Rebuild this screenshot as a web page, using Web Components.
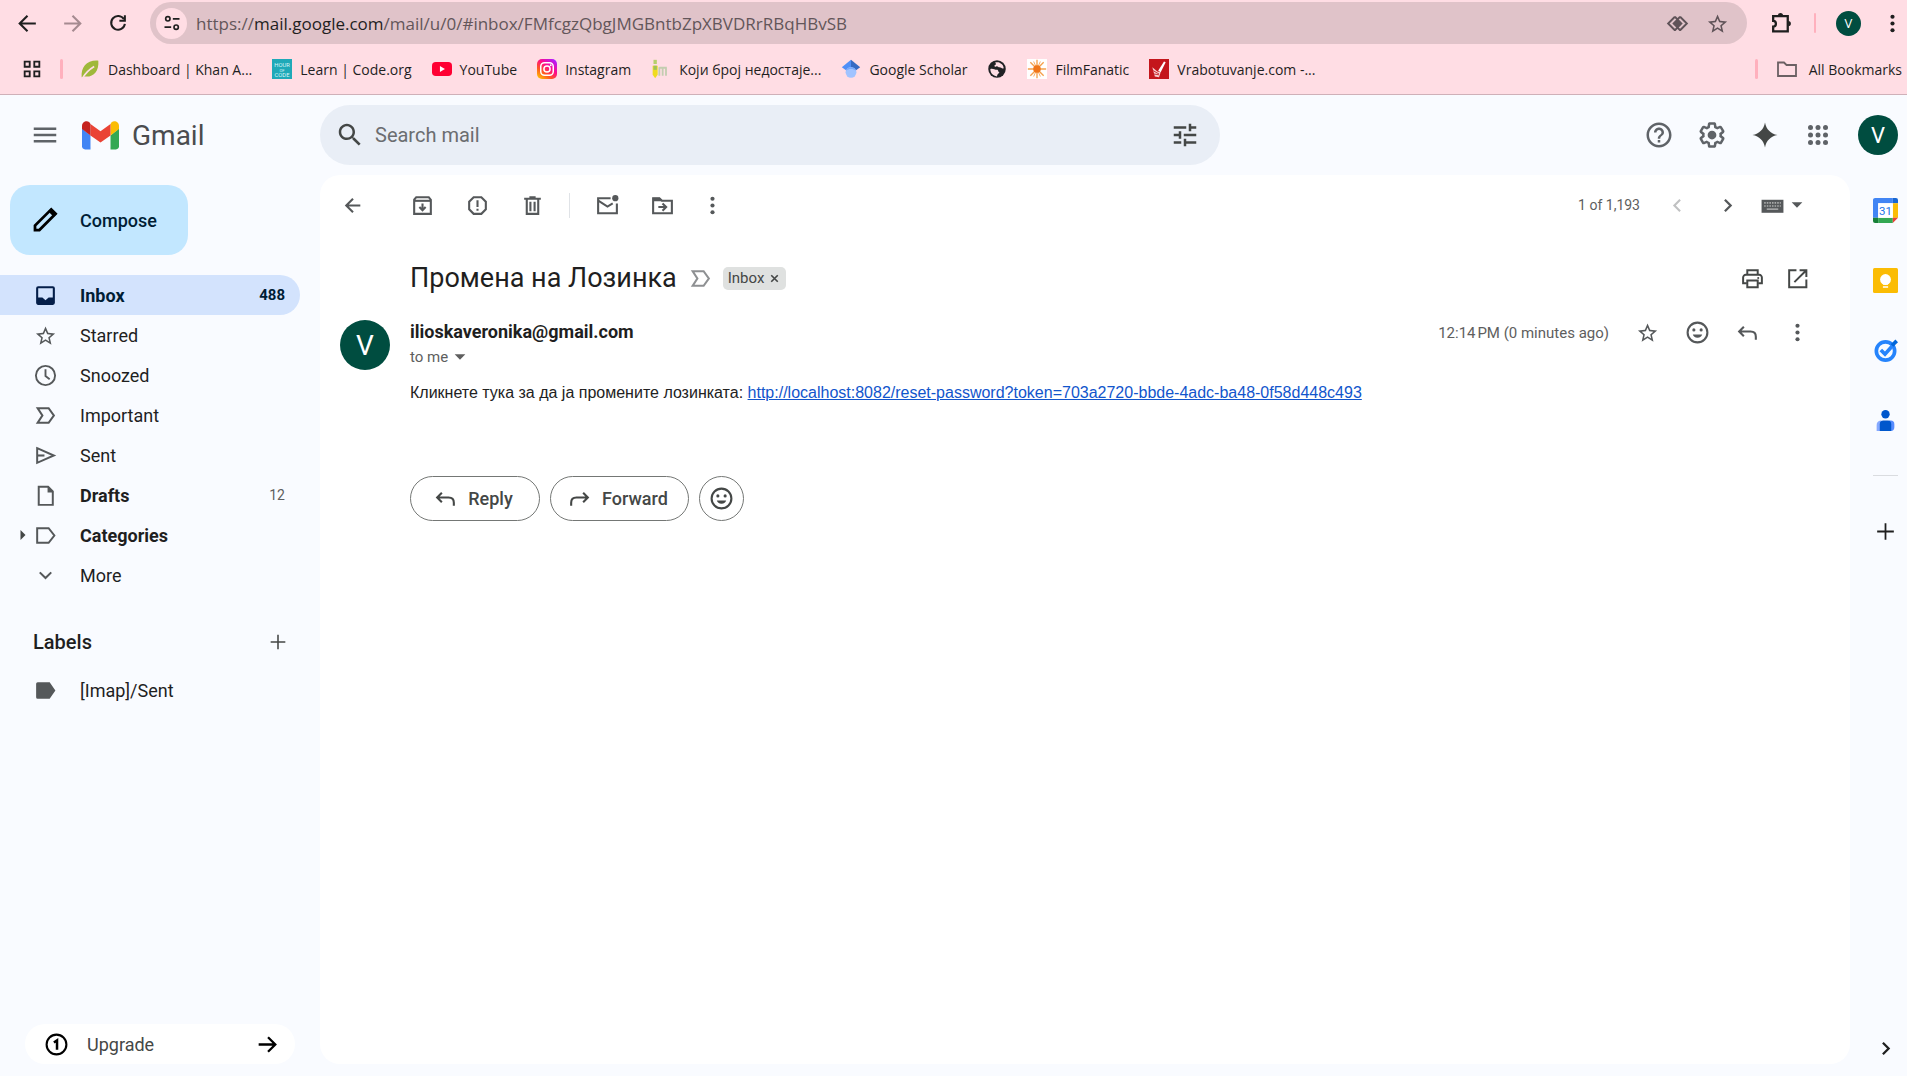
<!DOCTYPE html>
<html lang="en">
<head>
<meta charset="utf-8">
<meta name="viewport" content="width=device-width, initial-scale=1">
<title>Промена на Лозинка - Gmail</title>
<style>
    html, body {
        margin: 0;
        height: 100%;
    }
    body {
        display: flex;
        flex-direction: column;
        min-height: 100vh;
        background: #f9fbff;
        color: #1f1f1f;
        font-family: Roboto, "Liberation Sans", sans-serif;
        --icon: #444746;
        --muted: #5e5e5e;
    }
    gmail-app {
        flex: 1;
    }
</style>
</head>
<body>
<browser-chrome url-scheme="https://" url-host="mail.google.com" url-path="/mail/u/0/#inbox/FMfcgzQbgJMGBntbZpXBVDRrRBqHBvSB">
    <bookmark-link icon="khan">Dashboard | Khan A...</bookmark-link>
    <bookmark-link icon="code">Learn | Code.org</bookmark-link>
    <bookmark-link icon="youtube">YouTube</bookmark-link>
    <bookmark-link icon="instagram">Instagram</bookmark-link>
    <bookmark-link icon="quiz">Који број недостаје...</bookmark-link>
    <bookmark-link icon="scholar">Google Scholar</bookmark-link>
    <bookmark-link icon="globe"></bookmark-link>
    <bookmark-link icon="film">FilmFanatic</bookmark-link>
    <bookmark-link icon="vrab">Vrabotuvanje.com -...</bookmark-link>
</browser-chrome>

<gmail-app>
    <gmail-header slot="header"></gmail-header>
    <mail-sidebar slot="sidebar">
        <nav-item icon="inbox" count="488" active>Inbox</nav-item>
        <nav-item icon="star">Starred</nav-item>
        <nav-item icon="clock">Snoozed</nav-item>
        <nav-item icon="important">Important</nav-item>
        <nav-item icon="send">Sent</nav-item>
        <nav-item icon="draft" count="12" strong>Drafts</nav-item>
        <nav-item icon="label" strong expandable>Categories</nav-item>
        <nav-item icon="expand">More</nav-item>
        <nav-item icon="labelFilled" slot="labels">[Imap]/Sent</nav-item>
    </mail-sidebar>
    <mail-view slot="main">
        <mail-toolbar slot="toolbar"></mail-toolbar>
        <mail-message sender="ilioskaveronika@gmail.com" initial="V" time="12:14&#8239;PM (0 minutes ago)">
            <span slot="subject">Промена на Лозинка</span>
            Кликнете тука за да ја промените лозинката:
            <a href="http://localhost:8082/reset-password?token=703a2720-bbde-4adc-ba48-0f58d448c493">http://localhost:8082/reset-password?token=703a2720-bbde-4adc-ba48-0f58d448c493</a>
        </mail-message>
    </mail-view>
    <side-rail slot="rail"></side-rail>
</gmail-app>

<script>
const line = (d, w = 2) => `<path d="${d}" fill="none" stroke="currentColor" stroke-width="${w}"/>`;
const fill = d => `<path d="${d}" fill="currentColor"/>`;
const dots = pts => pts.map(([x, y, r]) => `<circle cx="${x}" cy="${y}" r="${r}" fill="currentColor"/>`).join('');
const ring = (x, y, r, w = 2) => `<circle cx="${x}" cy="${y}" r="${r}" fill="none" stroke="currentColor" stroke-width="${w}"/>`;

const ICONS = {
    // browser
    navBack: line('M20 12H5M12 4.5L4.5 12l7.5 7.5'),
    navForward: line('M4 12h15M12 4.5l7.5 7.5-7.5 7.5'),
    reload: line('M18.5 8A7.5 7.5 0 1 0 19.5 13', 2.2) + line('M19.5 3.5v6h-6', 2.2),
    siteInfo: line('M13 7h8M3 17h8') + ring(7, 7, 2.6) + ring(17, 17, 2.6),
    lens: line('M9.5 5.5L3 12l6.5 6.5M14.5 5.5L21 12l-6.5 6.5M9.5 5.5L12 8l2.5-2.5M9.5 18.5L12 16l2.5 2.5', 1.8) + fill('M12 7l5 5-5 5-5-5z'),
    puzzle: line('M4 5h14v14.5H4V15c3.5 0 3.5-5.5 0-5.5z', 2.2) + fill('M8.5 4.5a2.5 2.5 0 0 1 5 0zM18.5 9.5a2.5 2.5 0 0 1 0 5z'),
    grid: line('M4 4h5.5v5.5H4zM14.5 4H20v5.5h-5.5zM4 14.5h5.5V20H4zM14.5 14.5H20V20h-5.5z'),
    folder: line('M3 5.5h6L11.5 8H21v11H3z', 1.8),
    khan: '<path d="M2 22C1 10 8 1 22 2c1 13-6 20-16 19z" fill="#9fb83a"/><path d="M3 23C7 16 12 12 17 9" fill="none" stroke="#ffdde4" stroke-width="2"/>',
    code: '<rect width="24" height="24" fill="#1fa9b8"/><g fill="#d6f3f5" font-family="Roboto, sans-serif" font-size="7" text-anchor="middle"><text x="12" y="9">HOUR</text><text x="12" y="15" font-size="5">OF</text><text x="12" y="21">CODE</text></g>',
    youtube: '<rect y="3.5" width="24" height="17" rx="4.5" fill="#ff0033"/><path d="M9.5 8.5v7l6-3.5z" fill="#fff"/>',
    instagram: '<defs><linearGradient id="ig" x1="0" y1="1" x2=".8" y2="0"><stop offset="0" stop-color="#ffd400"/><stop offset=".35" stop-color="#ff5a1f"/><stop offset=".65" stop-color="#ff0a8a"/><stop offset="1" stop-color="#b01cff"/></linearGradient></defs><rect width="24" height="24" rx="6" fill="url(#ig)"/><rect x="4.5" y="4.5" width="15" height="15" rx="4.5" fill="none" stroke="#fff" stroke-width="1.8"/><circle cx="12" cy="12" r="3.7" fill="none" stroke="#fff" stroke-width="1.8"/><circle cx="16.5" cy="7.5" r="1.1" fill="#fff"/>',
    quiz: '<rect x="3" y="1" width="4" height="5" fill="#b5cf6b"/><path d="M2 8h6v11l-3 4-3-4z" fill="#f0dc1e"/><path d="M3 8h4v5H3z" fill="#9fc25a"/><path d="M10 20V10M14 20V11M18 20V11M10 10.5h9" stroke="#c3cdb0" stroke-width="2.2"/>',
    scholar: '<path d="M12 1l11 9-7 5-4-5z" fill="#356ac3"/><path d="M12 1L1 10l7 5 4-5z" fill="#4f8ff7"/><circle cx="12" cy="16" r="6.5" fill="#a0c3ff"/><path d="M6 14a6.5 6.5 0 0 1 12 0c-3-2.5-9-2.5-12 0z" fill="#76a7fa"/>',
    globe: '<circle cx="12" cy="12" r="10.5" fill="#202124"/><path d="M4 12c3-1 5 1 8 1 2 0 1 3 3 3-1 2-3 2-3 5-5-1-8-4-8-9zM10 4c2 0 4-1 6 1 3 1 4 4 4 6-2 1-3-1-5-1s-2-2-4-1-3-1-1-2 0-1 0-3z" fill="#ffdde4"/>',
    film: '<rect width="24" height="24" fill="#fff"/><path d="M12 1v22M1 12h22M4 4l16 16M20 4L4 20" stroke="#f5a04b" stroke-width="1.6"/><path d="M8 3l8 18M16 3L8 21" stroke="#f5a04b"/><circle cx="12" cy="12" r="4.5" fill="#f0761a"/>',
    vrab: '<rect width="24" height="24" fill="#c4161c"/><path d="M11 14L18 3l2 1-6 12z" fill="#fff"/><path d="M4 10l6 5 4 1-2 6-5-1z" fill="#f6cfd0"/><path d="M5 14l7 4M6 18l6 1" stroke="#c4161c"/>',
    // mail header
    menu: fill('M3 18h18v-2H3v2zm0-5h18v-2H3v2zm0-7v2h18V6H3z'),
    search: fill('M15.5 14h-.79l-.28-.27C15.41 12.59 16 11.11 16 9.5 16 5.91 13.09 3 9.5 3S3 5.91 3 9.5 5.91 16 9.5 16c1.61 0 3.09-.59 4.23-1.57l.27.28v.79l5 4.99L20.49 19l-4.99-5zm-6 0C7.01 14 5 11.99 5 9.5S7.01 5 9.5 5 14 7.01 14 9.5 11.99 14 9.5 14z'),
    tune: fill('M3 17v2h6v-2H3zM3 5v2h10V5H3zm10 16v-2h8v-2h-8v-2h-2v6h2zM7 9v2H3v2h4v2h2V9H7zm14 4v-2H11v2h10zm-6-4h2V7h4V5h-4V3h-2v6z'),
    help: fill('M11 18h2v-2h-2v2zm1-16C6.48 2 2 6.48 2 12s4.48 10 10 10 10-4.48 10-10S17.52 2 12 2zm0 18c-4.41 0-8-3.59-8-8s3.59-8 8-8 8 3.59 8 8-3.59 8-8 8zm0-14c-2.21 0-4 1.79-4 4h2c0-1.1.9-2 2-2s2 .9 2 2c0 2-3 1.75-3 5h2c0-2.25 3-2.5 3-5 0-2.21-1.79-4-4-4z'),
    settings: fill('M13.85 22.25h-3.7c-.74 0-1.36-.54-1.45-1.27l-.27-1.89c-.27-.14-.53-.29-.79-.46l-1.8.72c-.7.26-1.47-.03-1.81-.65L2.2 15.53c-.35-.66-.2-1.44.36-1.88l1.53-1.19c-.01-.15-.02-.3-.02-.46 0-.15.01-.31.02-.46l-1.52-1.19c-.59-.45-.74-1.26-.37-1.88l1.85-3.19c.34-.62 1.11-.9 1.79-.63l1.81.73c.26-.17.52-.32.78-.46l.27-1.91c.09-.7.71-1.25 1.44-1.25h3.7c.74 0 1.36.54 1.45 1.27l.27 1.89c.27.14.53.29.79.46l1.8-.72c.71-.26 1.48.03 1.82.65l1.84 3.18c.36.66.2 1.44-.36 1.88l-1.52 1.19c.01.15.02.3.02.46s-.01.31-.02.46l1.52 1.19c.56.45.72 1.23.37 1.86l-1.86 3.22c-.34.62-1.11.9-1.8.63l-1.8-.72c-.26.17-.52.32-.78.46l-.27 1.91c-.1.68-.72 1.22-1.46 1.22zm-3.23-2h2.76l.37-2.55.53-.22c.44-.18.88-.44 1.34-.78l.45-.34 2.38.96 1.38-2.4-2.03-1.58.07-.56c.03-.26.06-.51.06-.78s-.03-.53-.06-.78l-.07-.56 2.03-1.58-1.39-2.4-2.39.96-.45-.35c-.42-.32-.87-.58-1.33-.77l-.52-.22-.37-2.55h-2.76l-.37 2.55-.53.21c-.44.19-.88.44-1.34.79l-.45.33-2.38-.95-1.39 2.39 2.03 1.58-.07.56a7 7 0 0 0-.06.79c0 .26.02.53.06.78l.07.56-2.03 1.58 1.38 2.4 2.39-.96.45.35c.43.33.86.58 1.33.77l.53.22.38 2.55z') + dots([[12, 12, 3.5]]),
    sparkle: fill('M12 2c1 5.5 4.5 9 10 10-5.5 1-9 4.5-10 10-1-5.5-4.5-9-10-10 5.5-1 9-4.5 10-10z'),
    apps: dots([[6, 6, 2], [12, 6, 2], [18, 6, 2], [6, 12, 2], [12, 12, 2], [18, 12, 2], [6, 18, 2], [12, 18, 2], [18, 18, 2]]),
    gmail: '<path d="M2 21h3.5v-9L0 7.5V19c0 1.1.9 2 2 2z" fill="#4285f4"/><path d="M18.5 21H22c1.1 0 2-.9 2-2V7.5L18.5 12z" fill="#34a853"/><path d="M18.5 4.5V12L24 7.8v-2c0-2.5-2.8-3.9-4.8-2.4z" fill="#fbbc04"/><path d="M5.5 12V4.5L12 9.3l6.5-4.8V12L12 16.5z" fill="#ea4335"/><path d="M0 5.8v2L5.5 12V4.5l-.7-1.1C2.800 1.9 0 3.300 0 5.8z" fill="#c5221f"/>',
    // sidebar
    pencil: line('M4 20v-3.5L17 3.5 20.5 7 7.5 20z', 2.2) + fill('M14.5 5L17 2.5 21.5 7 19 9.5z'),
    inbox: fill('M19 3H5a2 2 0 0 0-2 2v14c0 1.1.9 2 2 2h14a2 2 0 0 0 2-2V5a2 2 0 0 0-2-2zm0 11h-4l-3 2.5L9 14H5V5h14z'),
    star: `<g transform="translate(1 1.5) scale(.92)">${fill('M22 9.24l-7.19-.62L12 2 9.19 8.63 2 9.24l5.46 4.73L5.82 21 12 17.27 18.18 21l-1.63-7.03L22 9.24zM12 15.4l-3.76 2.27 1-4.28-3.32-2.88 4.38-.38L12 6.1l1.71 4.04 4.38.38-3.32 2.88 1 4.28L12 15.4z')}</g>`,
    clock: ring(12, 12, 9.2, 1.8) + line('M12 6v6.5l4 3', 1.8),
    important: line('M4.5 5H15l5 7-5 7H4.5L9 12z'),
    send: line('M4 5l16 7-16 7z', 1.9) + line('M4 12h7'),
    draft: line('M5.5 3.5h9L19 8v13H5.5z', 1.9) + fill('M14 3v6h5.5z'),
    label: line('M4 5h11l5.5 7-5.5 7H4z', 1.9),
    labelFilled: fill('M3 5.5A1.5 1.5 0 0 1 4.5 4H16l5.5 8-5.500 8H4.500A1.500 1.500 0 0 1 3 18.500z'),
    expand: line('M6.5 9l5.5 5.5L17.5 9'),
    add: line('M12 4v16M4 12h16', 1.7),
    caretRight: fill('M9 6l6 6-6 6z'),
    caretDown: fill('M4 8h16l-8 8z'),
    one: ring(12, 12, 9.5) + line('M9.5 10l3-2v9', 2.4),
    arrowRight: line('M3.5 12h16M12.5 5l7 7-7 7', 2.2),
    // message
    back: line('M19.5 12h-13M12.5 5.5L6 12l6.5 6.5'),
    archive: line('M4 6.5L6 4h12l2 2.5V20H4z') + line('M4 7.5h16') + line('M12 10v6M9 13.5l3 3 3-3'),
    report: line('M8.3 4h7.4L20 8.3v7.4L15.7 20H8.3L4 15.7V8.3z') + line('M12 7v6.5M12 15v2'),
    trash: line('M6.5 6v14h11V6M4 5.5h16M9 4h6') + line('M10 8.5v9M14 8.5v9'),
    unread: line('M15 5H3v14.5h18V10') + line('M3.5 7.5L12 13l5-3') + dots([[19.5, 5, 3]]),
    move: line('M3 5h6l2.5 2.5H21v12H3z') + fill('M3 4.5h6.5L12 8H3z') + line('M8 13.5h7M12 10l3.5 3.5L12 17'),
    more: dots([[12, 5.5, 2], [12, 12, 2], [12, 18.5, 2]]),
    prev: line('M14.5 6.5L9 12l5.5 5.5'),
    next: line('M9.5 6.5L15 12l-5.500 5.500', 2.2),
    keyboard: fill('M1.500 6.500h21V19h-21z') + '<path d="M4 9.500h16M4 12.500h16" stroke="#a9aaaa" stroke-width="1.5" stroke-dasharray="1.5 1"/><path d="M6.500 15.500h11" stroke="#a9aaaa" stroke-width="1.5"/>',
    print: line('M7 8V4h10v4M6 16.5H3V11a2.5 2.5 0 0 1 2.5-2.5h13A2.5 2.5 0 0 1 21 11v5.5h-3M7 14h10v6.5H7z', 1.9) + dots([[17.5, 11.5, 1]]),
    popout: line('M11 4H4v16.5h16.5V13M14 4h6.5v6.5M20 4.5L9 15.5', 1.9),
    emoji: ring(12, 12, 9.5) + dots([[8.5, 9.5, 1.5], [15.5, 9.5, 1.5]]) + fill('M7.5 14h9a4.6 3.8 0 0 1-9 0z'),
    reply: line('M8.5 6.5L4 11l4.5 4.5M4.5 11H15q5 0 5 5v3'),
    forward: line('M15.5 6.5L20 11l-4.5 4.5M19.5 11H9q-5 0-5 5v3'),
    close: line('M6 6l12 12M18 6L6 18', 3),
    // rail
    calendar: '<path d="M2 0h17v5H5v14H0V2C0 .9.9 0 2 0z" fill="#4285f4"/><path d="M19 0h3a2 2 0 0 1 2 2v3h-5z" fill="#1967d2"/><path d="M19 5h5v14h-5z" fill="#fbbc04"/><path d="M5 19h14v5H5z" fill="#34a853"/><path d="M0 19h5v5H2a2 2 0 0 1-2-2z" fill="#188038"/><path d="M19 19h5l-5 5z" fill="#ea4335"/><path d="M5 5h14v14H5z" fill="#fff"/><text x="12" y="16" font-family="Roboto, sans-serif" font-size="11" text-anchor="middle" fill="#1a73e8">31</text>',
    keep: '<rect width="24" height="24" rx="1.5" fill="#fbbc04"/><circle cx="12" cy="11" r="5.2" fill="#fff"/><path d="M9.5 13h5v3h-5zM9.5 17.5h5V19h-5z" fill="#fff"/>',
    tasks: '<circle cx="12" cy="12.5" r="8.8" fill="none" stroke="#2684fc" stroke-width="3.5"/><path d="M7.5 11.5l4 4L20 6" fill="none" stroke="#2684fc" stroke-width="3.5"/><path d="M17 6l4.5-4.5L24 4l-4.5 4.5z" fill="#0066da"/>',
    contacts: '<circle cx="12" cy="6" r="4" fill="#0057cc"/><path d="M8 12h-.5a4.5 4.5 0 0 0-4 4.5V22H9z" fill="#86a9ff"/><path d="M15 12h2a3.5 3.5 0 0 1 3.5 3.5v3A3.5 3.5 0 0 1 17 22h-2z" fill="#578cff"/><path d="M10 12h4a3.5 3.5 0 0 1 3.5 3.5V22h-11v-6.5A3.5 3.5 0 0 1 10 12z" fill="#0057cc"/>'
};

class AppIcon extends HTMLElement {
    constructor() {
        super();
        this.attachShadow({ mode: 'open' });
    }

    connectedCallback() {
        const size = this.getAttribute('size') || 25;
        this.shadowRoot.innerHTML = `
            <style>
                :host { display: inline-flex; flex: none; }
                svg { display: block; }
            </style>
            <svg width="${size}" height="${size}" viewBox="0 0 24 24" aria-hidden="true">${ICONS[this.getAttribute('name')]}</svg>
        `;
    }
}

class IconButton extends HTMLElement {
    constructor() {
        super();
        this.attachShadow({ mode: 'open' });
    }

    connectedCallback() {
        this.shadowRoot.innerHTML = `
            <style>
                :host { display: block; flex: none; width: 45px; color: var(--icon); }
                button {
                    display: flex;
                    align-items: center;
                    justify-content: center;
                    gap: 4px;
                    width: 100%;
                    height: 40px;
                    padding: 0;
                    border: 0;
                    border-radius: 20px;
                    background: none;
                    color: inherit;
                    cursor: pointer;
                }
            </style>
            <button type="button" aria-label="${this.getAttribute('label')}">
                <app-icon name="${this.getAttribute('icon')}" size="${this.getAttribute('size') || 25}"></app-icon>
                <slot></slot>
            </button>
        `;
    }
}

class UserAvatar extends HTMLElement {
    constructor() {
        super();
        this.attachShadow({ mode: 'open' });
        this.shadowRoot.innerHTML = `
            <style>
                :host {
                    display: flex;
                    flex: none;
                    align-items: center;
                    justify-content: center;
                    width: 40px;
                    height: 40px;
                    border-radius: 50%;
                    background: #004d40;
                    color: #fff;
                    font-size: 22px;
                }
            </style>
            <slot></slot>
        `;
    }
}

class BookmarkLink extends HTMLElement {
    constructor() {
        super();
        this.attachShadow({ mode: 'open' });
    }

    connectedCallback() {
        this.shadowRoot.innerHTML = `
            <style>
                :host { display: block; flex: none; }
                a {
                    display: flex;
                    align-items: center;
                    gap: 8px;
                    color: #1f1f1f;
                    text-decoration: none;
                    white-space: nowrap;
                }
            </style>
            <a href="#"><app-icon name="${this.getAttribute('icon')}" size="20"></app-icon><slot></slot></a>
        `;
    }
}

class BrowserChrome extends HTMLElement {
    constructor() {
        super();
        this.attachShadow({ mode: 'open' });
    }

    connectedCallback() {
        this.shadowRoot.innerHTML = `
            <style>
                :host {
                    display: block;
                    flex: none;
                    background: #ffdde4;
                    border-bottom: 1px solid #cfb0b8;
                    color: #1f1f1f;
                    font-family: "Open Sans", "Noto Sans", sans-serif;
                    font-size: 14px;
                    --icon: #1f1f1f;
                }
                .row { display: flex; align-items: center; }
                .nav { height: 42px; padding: 2px 0 2px 5px; }
                .disabled { --icon: #a58a90; }
                .omnibox {
                    display: flex;
                    flex: 1;
                    align-items: center;
                    min-width: 0;
                    height: 42px;
                    margin-left: 10px;
                    padding: 0 10px 0 6px;
                    border-radius: 21px;
                    background: #e0c3c9;
                    box-sizing: border-box;
                    --icon: #5f5358;
                }
                .site {
                    display: flex;
                    align-items: center;
                    justify-content: center;
                    width: 31px;
                    height: 31px;
                    padding: 0;
                    border: 0;
                    border-radius: 50%;
                    background: #ffdde4;
                    color: #1f1f1f;
                }
                .url {
                    flex: 1;
                    min-width: 0;
                    margin-left: 9px;
                    overflow: hidden;
                    color: #63565a;
                    font-size: 17px;
                    white-space: nowrap;
                }
                .url b { color: #1f1f1f; font-weight: 400; }
                .omnibox icon-button { width: 40px; }
                .extensions { margin-left: 12px; }
                .divider { flex: none; width: 3px; height: 20px; border-radius: 2px; background: #ffb0bd; }
                .nav .divider { width: 2px; margin: 0 20px 0 10px; }
                user-avatar { width: 25px; height: 25px; font-size: 13px; }
                .nav > .last { width: 30px; margin-left: 16px; }
                .marks { height: 48px; padding: 0 5px 2px 21px; box-sizing: border-box; }
                .marks > .divider { margin: 0 17px; }
                .list { display: flex; flex: 1; gap: 20px; min-width: 0; overflow: hidden; }
                .all { display: flex; align-items: center; gap: 10px; color: #1f1f1f; text-decoration: none; white-space: nowrap; }
                .all app-icon { color: #6b6063; }
            </style>
            <div class="row nav">
                <icon-button icon="navBack" label="Back"></icon-button>
                <icon-button class="disabled" icon="navForward" label="Forward"></icon-button>
                <icon-button icon="reload" label="Reload" size="22"></icon-button>
                <div class="omnibox">
                    <button class="site" type="button" aria-label="Site information"><app-icon name="siteInfo" size="20"></app-icon></button>
                    <div class="url">${this.getAttribute('url-scheme')}<b>${this.getAttribute('url-host')}</b>${this.getAttribute('url-path')}</div>
                    <icon-button icon="lens" label="Search with Lens"></icon-button>
                    <icon-button icon="star" label="Bookmark this tab"></icon-button>
                </div>
                <icon-button class="extensions" icon="puzzle" label="Extensions"></icon-button>
                <span class="divider"></span>
                <user-avatar>V</user-avatar>
                <icon-button class="last" icon="more" label="Chrome menu"></icon-button>
            </div>
            <div class="row marks">
                <app-icon name="grid" size="22"></app-icon>
                <span class="divider"></span>
                <div class="list"><slot></slot></div>
                <span class="divider"></span>
                <a class="all" href="#"><app-icon name="folder" size="24"></app-icon>All Bookmarks</a>
            </div>
        `;
    }
}

class GmailApp extends HTMLElement {
    constructor() {
        super();
        this.attachShadow({ mode: 'open' });
        this.shadowRoot.innerHTML = `
            <style>
                :host { display: flex; flex-direction: column; min-height: 0; }
                .content { display: flex; flex: 1; min-height: 0; }
                ::slotted([slot="sidebar"]) { flex: none; width: 320px; }
                ::slotted([slot="main"]) { flex: 1; min-width: 0; margin-bottom: 12px; }
                ::slotted([slot="rail"]) { flex: none; width: 57px; }
            </style>
            <slot name="header"></slot>
            <div class="content">
                <slot name="sidebar"></slot>
                <slot name="main"></slot>
                <slot name="rail"></slot>
            </div>
        `;
    }
}

class GmailHeader extends HTMLElement {
    constructor() {
        super();
        this.attachShadow({ mode: 'open' });
        this.shadowRoot.innerHTML = `
            <style>
                :host {
                    display: flex;
                    flex: none;
                    align-items: center;
                    height: 80px;
                    padding-right: 9px;
                }
                .brand { display: flex; flex: none; align-items: center; width: 300px; padding-left: 20px; }
                .brand icon-button { width: 50px; --icon: #5f6368; }
                .logo {
                    display: flex;
                    align-items: center;
                    gap: 13px;
                    margin-left: 12px;
                    color: #4b4c4f;
                    font-size: 28px;
                    text-decoration: none;
                }
                form {
                    display: flex;
                    flex: 0 1 900px;
                    align-items: center;
                    height: 60px;
                    padding: 0 10px 0 5px;
                    border-radius: 30px;
                    background: #e9eef6;
                    box-sizing: border-box;
                }
                form icon-button { width: 50px; }
                input {
                    flex: 1;
                    min-width: 0;
                    padding: 0;
                    border: 0;
                    outline: 0;
                    background: none;
                    color: #1f1f1f;
                    font: 20px Roboto, sans-serif;
                }
                input::placeholder { color: #6b6d70; opacity: 1; }
                .actions { display: flex; align-items: center; gap: 3px; margin-left: auto; --icon: #5f6368; }
                .actions icon-button { width: 50px; }
                .actions .gemini { --icon: #444746; }
                user-avatar { margin-left: 12px; }
            </style>
            <div class="brand">
                <icon-button icon="menu" label="Main menu" size="30"></icon-button>
                <a class="logo" href="#inbox"><app-icon name="gmail" size="37"></app-icon>Gmail</a>
            </div>
            <form role="search">
                <icon-button icon="search" label="Search" size="30"></icon-button>
                <input type="text" aria-label="Search mail" placeholder="Search mail">
                <icon-button icon="tune" label="Advanced search options" size="30"></icon-button>
            </form>
            <div class="actions">
                <icon-button icon="help" label="Support" size="30"></icon-button>
                <icon-button icon="settings" label="Settings" size="30"></icon-button>
                <icon-button class="gemini" icon="sparkle" label="Gemini" size="30"></icon-button>
                <icon-button icon="apps" label="Google apps" size="30"></icon-button>
                <user-avatar>V</user-avatar>
            </div>
        `;
    }
}

class NavItem extends HTMLElement {
    constructor() {
        super();
        this.attachShadow({ mode: 'open' });
    }

    connectedCallback() {
        const caret = this.hasAttribute('expandable') ? '<app-icon name="caretRight" size="20"></app-icon>' : '';
        this.shadowRoot.innerHTML = `
            <style>
                :host { display: block; }
                a {
                    display: flex;
                    align-items: center;
                    height: 40px;
                    margin-right: 20px;
                    padding-right: 15px;
                    border-radius: 0 20px 20px 0;
                    color: #1f1f1f;
                    font-size: 18px;
                    text-decoration: none;
                }
                .caret { display: flex; flex: none; justify-content: flex-end; width: 33px; color: var(--icon); }
                .icon { width: 47px; color: #55585a; }
                .label { flex: 1; }
                .count { color: var(--muted); font-size: 14px; }
                :host([strong]) .label { font-weight: 700; }
                :host([active]) a { background: #d3e3fd; color: #001d35; font-weight: 700; }
                :host([active]) .icon { color: #041e49; }
                :host([active]) .count { color: #001d35; font-size: 15px; }
            </style>
            <a href="#">
                <span class="caret">${caret}</span>
                <app-icon class="icon" name="${this.getAttribute('icon')}"></app-icon>
                <span class="label"><slot></slot></span>
                <span class="count">${this.getAttribute('count') || ''}</span>
            </a>
        `;
    }
}

class MailSidebar extends HTMLElement {
    constructor() {
        super();
        this.attachShadow({ mode: 'open' });
        this.shadowRoot.innerHTML = `
            <style>
                :host { display: flex; flex-direction: column; }
                .compose {
                    display: flex;
                    align-items: center;
                    gap: 20px;
                    width: 178px;
                    height: 70px;
                    margin: 10px 0 20px 10px;
                    padding: 0 0 0 20px;
                    border: 0;
                    border-radius: 20px;
                    background: #c2e7ff;
                    color: #001d35;
                    font: 500 18px Roboto, sans-serif;
                }
                .compose app-icon { color: #000; }
                .heading {
                    display: flex;
                    align-items: center;
                    justify-content: space-between;
                    height: 50px;
                    margin: 22px 20px 3px 33px;
                }
                h2 { margin: 0; font-size: 20px; font-weight: 500; }
                .upgrade {
                    display: flex;
                    align-items: center;
                    height: 40px;
                    margin: auto 25px 12px;
                    padding: 0 15px 0 19px;
                    border-radius: 20px;
                    background: #fff;
                    color: #000;
                    font-size: 18px;
                    text-decoration: none;
                }
                .upgrade span { flex: 1; margin-left: 18px; color: #444746; }
            </style>
            <button class="compose" type="button"><app-icon name="pencil" size="30"></app-icon>Compose</button>
            <nav><slot></slot></nav>
            <div class="heading">
                <h2>Labels</h2>
                <icon-button icon="add" label="Create new label" size="22"></icon-button>
            </div>
            <nav><slot name="labels"></slot></nav>
            <a class="upgrade" href="#">
                <app-icon name="one"></app-icon><span>Upgrade</span><app-icon name="arrowRight"></app-icon>
            </a>
        `;
    }
}

class MailToolbar extends HTMLElement {
    constructor() {
        super();
        this.attachShadow({ mode: 'open' });
        this.shadowRoot.innerHTML = `
            <style>
                :host {
                    display: flex;
                    align-items: center;
                    height: 60px;
                    padding: 0 45px 0 10px;
                    --icon: #55585a;
                }
                .group { display: flex; gap: 10px; margin-left: 25px; }
                .group + .group {
                    align-items: center;
                    height: 25px;
                    margin-left: 14px;
                    padding-left: 15px;
                    border-left: 1px solid #e0e3e7;
                }
                .more { width: 35px; }
                .pager { display: flex; align-items: center; gap: 5px; margin-left: auto; }
                .pager span { margin-right: 10px; color: var(--muted); font-size: 14px; }
                .prev { --icon: #c0c1c2; }
                .keys { margin-left: 5px; }
            </style>
            <icon-button icon="back" label="Back to Inbox"></icon-button>
            <div class="group">
                <icon-button icon="archive" label="Archive"></icon-button>
                <icon-button icon="report" label="Report spam"></icon-button>
                <icon-button icon="trash" label="Delete"></icon-button>
            </div>
            <div class="group">
                <icon-button icon="unread" label="Mark as unread"></icon-button>
                <icon-button icon="move" label="Move to"></icon-button>
                <icon-button class="more" icon="more" label="More email options"></icon-button>
            </div>
            <div class="pager">
                <span>1 of 1,193</span>
                <icon-button class="prev" icon="prev" label="Newer"></icon-button>
                <icon-button icon="next" label="Older"></icon-button>
                <icon-button class="keys" icon="keyboard" label="Select input tool"><app-icon name="caretDown" size="16"></app-icon></icon-button>
            </div>
        `;
    }
}

class MailMessage extends HTMLElement {
    constructor() {
        super();
        this.attachShadow({ mode: 'open' });
    }

    connectedCallback() {
        this.shadowRoot.innerHTML = `
            <style>
                :host { display: block; padding: 20px 30px 40px 20px; }
                .row { display: flex; }
                .subject { align-items: center; height: 46px; margin-bottom: 19px; padding-left: 70px; }
                h1 { margin: 0 11px 0 0; font-size: 27px; font-weight: 400; }
                .subject > app-icon { color: #8e9092; }
                .chip {
                    display: flex;
                    align-items: center;
                    gap: 4px;
                    height: 23px;
                    margin: 0 auto 0 10px;
                    padding: 0 5px;
                    border: 0;
                    border-radius: 5px;
                    background: #dfe1e0;
                    color: #444746;
                    font: 15px Roboto, sans-serif;
                }
                user-avatar { width: 50px; height: 50px; margin-right: 20px; font-size: 28px; }
                .content { flex: 1; min-width: 0; }
                .sender { height: 24px; font-size: 18px; font-weight: 700; line-height: 24px; }
                .to {
                    display: flex;
                    align-items: center;
                    gap: 4px;
                    height: 25px;
                    padding: 0;
                    border: 0;
                    background: none;
                    color: var(--muted);
                    font: 15px Roboto, sans-serif;
                }
                .meta { display: flex; gap: 5px; height: 25px; align-items: center; color: var(--muted); font-size: 15px; --icon: #55585a; }
                .meta span { margin-right: 11px; }
                .text { margin: 12px 0 71px; color: #222; font: 16px/24px "Liberation Sans", Arial, sans-serif; }
                ::slotted(a) { color: #1155cc; }
                .reply { gap: 10px; }
                .reply button {
                    display: flex;
                    align-items: center;
                    justify-content: center;
                    gap: 10px;
                    min-width: 130px;
                    height: 45px;
                    padding: 0 20px 0 16px;
                    border: 1px solid #747775;
                    border-radius: 23px;
                    background: none;
                    color: #444746;
                    font: 500 18px Roboto, sans-serif;
                }
                .reply .react { min-width: 45px; padding: 0; }
            </style>
            <div class="row subject">
                <h1><slot name="subject"></slot></h1>
                <app-icon name="important"></app-icon>
                <button class="chip" type="button">Inbox<app-icon name="close" size="13"></app-icon></button>
                <icon-button icon="print" label="Print all"></icon-button>
                <icon-button icon="popout" label="In new window"></icon-button>
            </div>
            <div class="row">
                <user-avatar>${this.getAttribute('initial')}</user-avatar>
                <div class="content">
                    <div class="row">
                        <div class="content">
                            <div class="sender">${this.getAttribute('sender')}</div>
                            <button class="to" type="button">to me<app-icon name="caretDown" size="16"></app-icon></button>
                        </div>
                        <div class="meta">
                            <span>${this.getAttribute('time')}</span>
                            <icon-button icon="star" label="Not starred"></icon-button>
                            <icon-button icon="emoji" label="Add reaction"></icon-button>
                            <icon-button icon="reply" label="Reply"></icon-button>
                            <icon-button icon="more" label="More message options"></icon-button>
                        </div>
                    </div>
                    <div class="text"><slot></slot></div>
                    <div class="row reply">
                        <button type="button"><app-icon name="reply"></app-icon>Reply</button>
                        <button type="button"><app-icon name="forward"></app-icon>Forward</button>
                        <button class="react" type="button" aria-label="Add reaction"><app-icon name="emoji"></app-icon></button>
                    </div>
                </div>
            </div>
        `;
    }
}

class MailView extends HTMLElement {
    constructor() {
        super();
        this.attachShadow({ mode: 'open' });
        this.shadowRoot.innerHTML = `
            <style>
                :host { display: block; border-radius: 20px; background: #fff; }
            </style>
            <slot name="toolbar"></slot>
            <slot></slot>
        `;
    }
}

class SideRail extends HTMLElement {
    constructor() {
        super();
        this.attachShadow({ mode: 'open' });
        this.shadowRoot.innerHTML = `
            <style>
                :host {
                    display: flex;
                    flex-direction: column;
                    gap: 30px;
                    padding: 15px 0 8px 13px;
                    box-sizing: border-box;
                    --icon: #1f1f1f;
                }
                hr { width: 25px; height: 1px; margin: 5px 0 5px 10px; border: 0; background: #dadce0; }
                .toggle { margin-top: auto; }
            </style>
            <icon-button icon="calendar" label="Calendar"></icon-button>
            <icon-button icon="keep" label="Keep"></icon-button>
            <icon-button icon="tasks" label="Tasks"></icon-button>
            <icon-button icon="contacts" label="Contacts"></icon-button>
            <hr>
            <icon-button icon="add" label="Get add-ons"></icon-button>
            <icon-button class="toggle" icon="next" label="Hide side panel"></icon-button>
        `;
    }
}

customElements.define('app-icon', AppIcon);
customElements.define('icon-button', IconButton);
customElements.define('user-avatar', UserAvatar);
customElements.define('bookmark-link', BookmarkLink);
customElements.define('browser-chrome', BrowserChrome);
customElements.define('gmail-app', GmailApp);
customElements.define('gmail-header', GmailHeader);
customElements.define('nav-item', NavItem);
customElements.define('mail-sidebar', MailSidebar);
customElements.define('mail-toolbar', MailToolbar);
customElements.define('mail-message', MailMessage);
customElements.define('mail-view', MailView);
customElements.define('side-rail', SideRail);
</script>
</body>
</html>
